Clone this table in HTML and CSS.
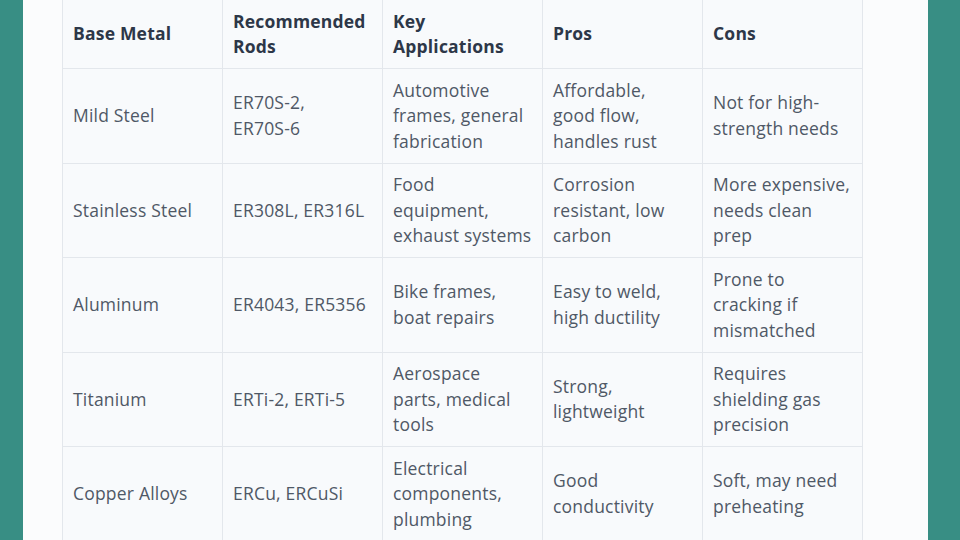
FILE: index.html
```html
<!DOCTYPE html>
<html>
<head>
<meta charset="utf-8">
<link rel="stylesheet" href="styles.css">
</head>
<body>
<div class="frame">
  <div class="panel">
    <table class="rods">
      <thead>
        <tr>
          <th>Base Metal</th>
          <th>Recommended Rods</th>
          <th>Key Applications</th>
          <th>Pros</th>
          <th>Cons</th>
        </tr>
      </thead>
      <tbody>
        <tr>
          <td>Mild Steel</td>
          <td><span class="code">ER70S-2,</span> <span class="code">ER70S-6</span></td>
          <td>Automotive frames, general fabrication</td>
          <td>Affordable, good flow, handles rust</td>
          <td>Not for high-strength needs</td>
        </tr>
        <tr>
          <td>Stainless Steel</td>
          <td>ER308L, ER316L</td>
          <td>Food equipment, exhaust systems</td>
          <td>Corrosion resistant, low carbon</td>
          <td>More expensive, needs clean prep</td>
        </tr>
        <tr>
          <td>Aluminum</td>
          <td>ER4043, ER5356</td>
          <td>Bike frames, boat repairs</td>
          <td>Easy to weld, high ductility</td>
          <td>Prone to cracking if mismatched</td>
        </tr>
        <tr>
          <td>Titanium</td>
          <td><span class="code">ERTi-2,</span> <span class="code">ERTi-5</span></td>
          <td>Aerospace parts, medical tools</td>
          <td>Strong, lightweight</td>
          <td>Requires shielding gas precision</td>
        </tr>
        <tr>
          <td>Copper Alloys</td>
          <td>ERCu, ERCuSi</td>
          <td>Electrical components, plumbing</td>
          <td>Good conductivity</td>
          <td>Soft, may need preheating</td>
        </tr>
      </tbody>
    </table>
  </div>
</div>
</body>
</html>
```
FILE: styles.css
```css
html, body {
  margin: 0;
  padding: 0;
  height: 100%;
  overflow: hidden;
}
body {
  background: #388e84;
  font-family: "Open Sans", "Liberation Sans", sans-serif;
}
.frame {
  display: flex;
  padding: 0 32px 0 23px;
  height: 100%;
}
.panel {
  flex: 1;
  background: #fbfcfd;
  padding: 0 39px;
}
.rods {
  border-collapse: collapse;
  width: 800px;
  margin-top: -1px;
  table-layout: fixed;
  background: #f8fafc;
}
.rods th, .rods td {
  box-sizing: border-box;
  border: 1px solid #e3e7ec;
  padding: 8.5px 10px;
  font-size: 17.5px;
  letter-spacing: 0.2px;
  line-height: 25.5px;
  text-align: left;
  vertical-align: middle;
  width: 160px;
}
.rods th {
  color: #2d3748;
  font-weight: 700;
}
.rods td {
  color: #4f5866;
}
.code {
  white-space: nowrap;
}
```
